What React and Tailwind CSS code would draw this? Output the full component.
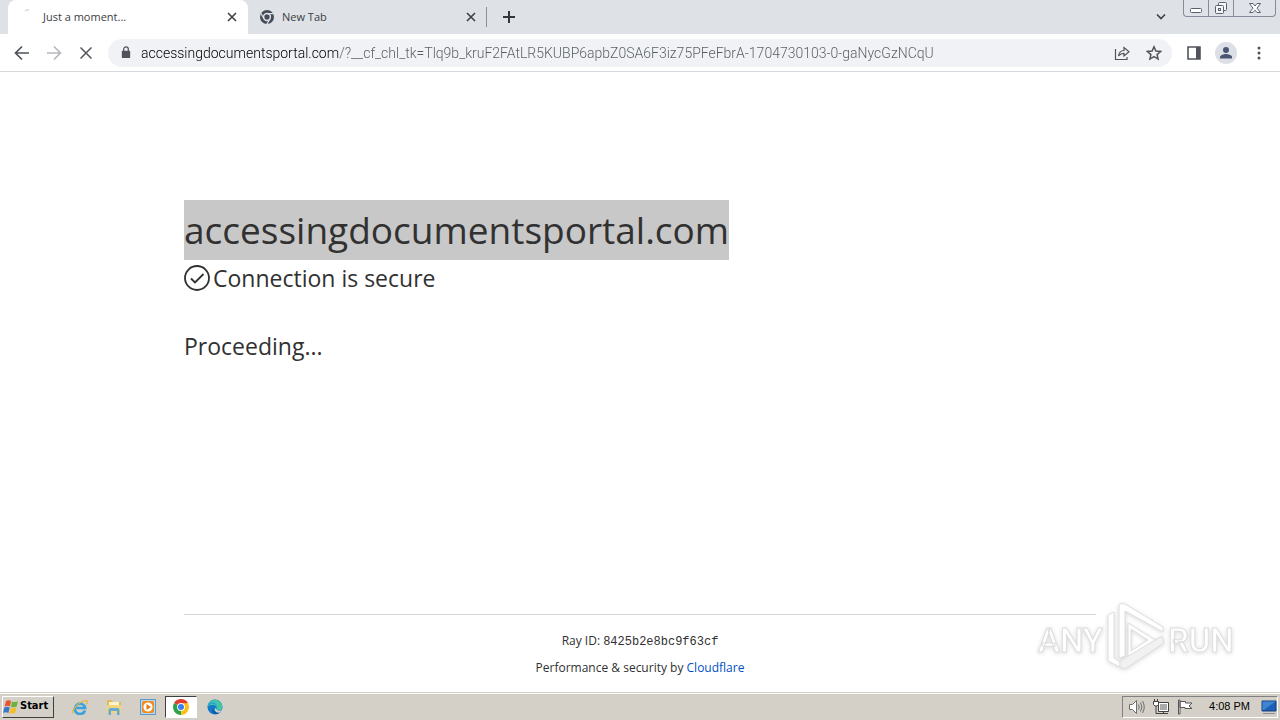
import React from "react";

const URL_TEXT =
  "accessingdocumentsportal.com/?__cf_chl_tk=Tlq9b_kruF2FAtLR5KUBP6apbZ0SA6F3iz75PFeFbrA-1704730103-0-gaNycGzNCqU";

function CloseIcon({ className }) {
  return (
    <svg viewBox="0 0 10 10" className={className} fill="none" stroke="currentColor" strokeWidth="1.6">
      <path d="M1 1l8 8M9 1L1 9" />
    </svg>
  );
}

function ChromeMono() {
  return (
    <svg viewBox="0 0 16 16" className="size-4 shrink-0">
      <circle cx="8" cy="8" r="7" fill="#454b58" />
      <circle cx="8" cy="8" r="3.4" fill="#454b58" stroke="#dee1e6" strokeWidth="1.5" />
      <path d="M8 4.6h6.4M5 9.7L1.9 4.3M11 9.7l-3.1 5.4" stroke="#dee1e6" strokeWidth="1.2" />
    </svg>
  );
}

function ChromeColor() {
  return (
    <svg viewBox="0 0 16 16" className="size-4">
      <path d="M8 8L1.1 4A8 8 0 0 1 14.9 4z" fill="#e33b2e" />
      <path d="M8 8l6.9-4A8 8 0 0 1 8 16z" fill="#fbc116" />
      <path d="M8 8v8A8 8 0 0 1 1.1 4z" fill="#2da14c" />
      <path d="M8 4.2h6.9L11.4 10 8 16l3.2-6.2z" fill="#fbc116" />
      <circle cx="8" cy="8" r="3.9" fill="#fff" />
      <circle cx="8" cy="8" r="3" fill="#3b7ded" />
    </svg>
  );
}

function Tabs() {
  return (
    <div className="flex h-[34px] shrink-0 items-start bg-[#dee1e6] text-[#3c4043]">
      <div role="tablist" className="flex h-full items-center">
        <div className="ml-2 flex h-full w-60 items-center rounded-t-lg bg-white pr-[11px] pl-4 text-[11px]">
          <svg viewBox="0 0 16 16" className="size-4 shrink-0" fill="none" stroke="#c4c7cc">
            <path d="M1 2q2-1.6 4-1" />
          </svg>
          <button role="tab" aria-selected="true" className="ml-[3px] flex-1 text-left">Just a moment...</button>
          <button aria-label="Close tab"><CloseIcon className="size-[10px]" /></button>
        </div>
        <div className="flex h-full w-[238px] items-center pr-[10px] pl-[11px] text-[11px]">
          <ChromeMono />
          <button role="tab" aria-selected="false" className="ml-[7px] flex-1 text-left">New Tab</button>
          <button aria-label="Close tab"><CloseIcon className="size-[10px]" /></button>
        </div>
        <div className="h-5 w-px bg-[#8d9197]" />
        <button aria-label="New tab" className="ml-4">
          <svg viewBox="0 0 12 12" className="size-3" stroke="#33373d" strokeWidth="2"><path d="M6 0v12M0 6h12" /></svg>
        </button>
      </div>
      <button aria-label="Search tabs" className="mt-3 mr-[17px] ml-auto">
        <svg viewBox="0 0 10 10" className="size-[10px]" fill="none" stroke="#3c4043" strokeWidth="1.6"><path d="M1 2.5l4 4 4-4" /></svg>
      </button>
      <div className="mr-1 flex h-[17px] rounded-b border border-t-0 border-[#858b98] bg-[#dfe2e8] text-[#5a606c]">
        <button aria-label="Minimize" className="flex w-[25px] items-center justify-center border-r border-[#858b98]">
          <svg viewBox="0 0 14 14" className="size-[14px]" fill="#fff" stroke="currentColor"><rect x="1.5" y="7.5" width="11" height="4" rx="1" /></svg>
        </button>
        <button aria-label="Restore" className="flex w-[25px] items-center justify-center border-r border-[#858b98]">
          <svg viewBox="0 0 14 14" className="size-[14px]" fill="#f4f5f7" stroke="currentColor">
            <rect x="4.5" y="1.5" width="8" height="8" rx="1" />
            <rect x="1.5" y="4.5" width="8" height="8" rx="1" />
            <rect x="4.5" y="7.5" width="2" height="2" />
          </svg>
        </button>
        <button aria-label="Close" className="flex w-[41px] items-center justify-center">
          <svg viewBox="0 0 14 14" className="size-[14px]" fill="#fff" stroke="currentColor">
            <path d="M1.5 2.5h3.500l2 2.500 2-2.500h3.500L9 7.200l3.500 4.300H9L7 9.200l-2 2.300H1.500L5 7.200z" />
          </svg>
        </button>
      </div>
    </div>
  );
}

function Toolbar() {
  return (
    <div className="flex h-[38px] shrink-0 items-center border-b border-[#d5d8dc] bg-white pr-[13px] pl-[14px] text-[#50545a]">
      <button aria-label="Back">
        <svg viewBox="0 0 16 16" className="size-4" fill="none" stroke="currentColor" strokeWidth="1.7"><path d="M15 8H2M8 1.500L1.500 8 8 14.500" /></svg>
      </button>
      <button aria-label="Forward" className="ml-4 text-[#b5b8bc]">
        <svg viewBox="0 0 16 16" className="size-4" fill="none" stroke="currentColor" strokeWidth="1.7"><path d="M1 8h13M8 1.500L14.500 8 8 14.500" /></svg>
      </button>
      <button aria-label="Stop" className="ml-[18px]">
        <svg viewBox="0 0 12 12" className="size-3" fill="none" stroke="currentColor" strokeWidth="1.5"><path d="M.5.5l11 11M11.500.5l-11 11" /></svg>
      </button>
      <div className="ml-4 flex h-7 flex-1 items-center rounded-full bg-[#f0f2f5] pr-[10px] pl-3">
        <svg viewBox="0 0 12 14" className="h-[13px] w-3 shrink-0">
          <rect x="1.500" y="5" width="9" height="8" rx="1" fill="#50545a" />
          <path d="M3.500 5.500V3.500a2.500 2.500 0 0 1 5 0v2" fill="none" stroke="#50545a" strokeWidth="1.400" />
        </svg>
        <input
          aria-label="Address"
          defaultValue={URL_TEXT}
          className="ml-[9px] min-w-0 flex-1 bg-transparent bg-linear-to-r from-black from-[198px] to-[#565b61] to-[198px] bg-clip-text font-['Roboto',sans-serif] text-[14px] leading-5 font-light text-transparent outline-none"
        />
        <button aria-label="Share">
          <svg viewBox="0 0 16 16" className="size-4" fill="none" stroke="currentColor" strokeWidth="1.200">
            <path d="M1.500 4v10.500h11.500V12M4.500 11C5 7.500 7 5.500 10 5.500V2.500l5 4.300-5 4.200V8.300C7.500 8.300 6 9 4.500 11z" />
          </svg>
        </button>
        <button aria-label="Bookmark" className="ml-4">
          <svg viewBox="0 0 16 16" className="size-4" fill="none" stroke="currentColor" strokeWidth="1.500">
            <path d="M8 1.800l1.900 4.300 4.700.4-3.500 3.100 1 4.500L8 11.700l-4.100 2.400 1-4.500L1.400 6.500l4.700-.4z" />
          </svg>
        </button>
      </div>
      <button aria-label="Side panel" className="ml-[15px]">
        <svg viewBox="0 0 14 14" className="size-[14px]"><path d="M1 1h12v12H1z" fill="none" stroke="#50545a" strokeWidth="1.600" /><path d="M9 1h4v12H9z" fill="#50545a" /></svg>
      </button>
      <button aria-label="Profile" className="ml-[14px]">
        <svg viewBox="0 0 22 22" className="size-[22px]">
          <circle cx="11" cy="11" r="11" fill="#dcdfe5" />
          <circle cx="11" cy="8" r="3" fill="#4a5572" />
          <path d="M5 16.500v-1.500c0-2 4-3 6-3s6 1 6 3v1.500z" fill="#4a5572" />
        </svg>
      </button>
      <button aria-label="Menu" className="ml-[14px]">
        <svg viewBox="0 0 16 16" className="size-4" fill="#50545a"><circle cx="8" cy="3" r="1.500" /><circle cx="8" cy="8" r="1.500" /><circle cx="8" cy="13" r="1.500" /></svg>
      </button>
    </div>
  );
}

function Watermark() {
  return (
    <svg viewBox="0 0 210 76" className="absolute right-[40px] bottom-4 h-[76px] w-[210px]" aria-label="ANY RUN">
      <g fill="#fff" stroke="#dedede" strokeWidth="1" className="drop-shadow-[0_1px_2px_rgba(0,0,0,0.15)]">
        <text x="8" y="52" fontSize="33" fontWeight="500" className="font-['Roboto',sans-serif]">ANY</text>
        <text x="138" y="52" fontSize="33" fontWeight="500" className="font-['Roboto',sans-serif]">RUN</text>
        <path d="M78 16q0-2 6-4v46l6 4v5l-12-6z" />
        <path fillRule="evenodd" d="M89 5q3-3 6-1l38 23v5L95 11v45l-6 2zM98 23l27 17-27 17zM101 29v22l17-11z" />
        <path d="M90 61l42-25 2 7-39 26-5-2z" fill="#f1f1f1" />
      </g>
    </svg>
  );
}

function Page() {
  return (
    <main className="relative flex min-h-0 flex-1 flex-col overflow-hidden bg-white px-[184px] text-[#313131]">
      <div className="flex flex-1 flex-col items-start pt-32">
        <h1 className="bg-[#c8c8c8] text-[37px] leading-[60px]">accessingdocumentsportal.com</h1>
        <h2 className="flex h-9 items-center gap-[3px] text-[23px] leading-9">
          <svg viewBox="0 0 26 26" className="size-[26px]" fill="none" stroke="#313131" strokeWidth="1.8">
            <circle cx="13" cy="13" r="12" />
            <path d="M7 13.500l4 4L19.500 9" />
          </svg>
          Connection is secure
        </h2>
        <p className="mt-8 text-[23px] leading-9">Proceeding...</p>
      </div>
      <footer className="mb-3 border-t border-[#d5d5d5] pt-4 text-center text-[12px] leading-[18px]">
        <p className="mb-2 pt-px">
          Ray ID: <code className="font-['Liberation_Mono',monospace]">8425b2e8bc9f63cf</code>
        </p>
        <p className="pb-[3px]">
          Performance &amp; security by <a href="#cloudflare" className="text-[#0051c3]">Cloudflare</a>
        </p>
      </footer>
      <Watermark />
    </main>
  );
}

function Taskbar() {
  return (
    <div className="flex h-7 shrink-0 items-center border-t border-[#d4d0c8] bg-[#d4d0c8] pl-[2px] text-black shadow-[inset_0_1px_0_#fff]">
      <button className="flex h-[22px] w-[52px] items-center gap-px border border-t-white border-r-[#404040] border-b-[#404040] border-l-white font-['DejaVu_Sans_Condensed','Noto_Sans',sans-serif] text-[11px] font-bold">
        <svg viewBox="0 0 16 16" className="size-4 shrink-0">
          <path d="M3 2q2.500-1.500 5 0L7 7.500q-2.500-1.500-5.300 0z" fill="#e8552b" />
          <path d="M9 2.500q3 1.200 6-.3L13.700 7.500q-3 1.500-5.700.3z" fill="#6cb33e" />
          <path d="M1.400 8.500q2.500-1.500 5.300 0l-1.300 5.500q-2.500-1.500-5.400 0z" fill="#3877c8" />
          <path d="M7.700 8.800q2.800 1.200 5.800-.3l-1.400 5.200q-2.800 1.500-5.700.3z" fill="#f7bd25" />
        </svg>
        Start
      </button>
      <div className="ml-[18px] flex items-center gap-[9px]">
        <button aria-label="Internet Explorer" className="w-[25px]">
          <svg viewBox="0 0 16 16" className="size-4" fill="none">
            <path d="M13 11.500A5.200 5.200 0 1 1 13.200 9H4.500" stroke="#3aa3df" strokeWidth="2.600" />
            <path d="M1 14.500C-1 11 8 2 14 1.500c2.500 0 1 3 0 4" stroke="#e9b62f" strokeWidth="1.200" />
          </svg>
        </button>
        <button aria-label="File Explorer" className="w-[25px]">
          <svg viewBox="0 0 16 16" className="size-4">
            <path d="M1 1h5l1 2h8v11H1z" fill="#dfb95a" />
            <path d="M3 3h10v4H3z" fill="#fbf4c8" />
            <path d="M1 6h14v8H1z" fill="#f0d57e" />
            <path d="M2.500 16v-5q0-2 2-2h7q2 0 2 2v5h-2.500v-4H5v4z" fill="#67a9d0" />
          </svg>
        </button>
        <button aria-label="Media Player" className="w-[25px]">
          <svg viewBox="0 0 16 16" className="size-4">
            <rect x=".5" y=".5" width="15" height="15" fill="#b9d8ee" stroke="#5e9ac7" />
            <rect x="2" y="2" width="12" height="12" rx="2" fill="#f08b1d" />
            <circle cx="8" cy="8" r="4.600" fill="#fff" />
            <path d="M6.500 5l4.500 3-4.500 3z" fill="#e87817" />
          </svg>
        </button>
      </div>
      <button aria-label="Google Chrome" className="flex h-[22px] w-8 items-center justify-center border border-t-[#404040] border-r-white border-b-white border-l-[#404040] bg-white">
        <ChromeColor />
      </button>
      <button aria-label="Microsoft Edge" className="ml-[10px]">
        <svg viewBox="0 0 16 16" className="size-4">
          <circle cx="8" cy="8" r="7.500" fill="#1479c9" />
          <path d="M.6 7A7.500 7.500 0 0 1 15.500 8c0 2.500-2 3.500-4 3.500-1.500 0-2.500-.7-2-1.500C11 7 7 4.500.6 7z" fill="#43c6a7" />
          <path d="M.6 7C2 2 9 2 10 7 6 3.500 1.500 5 .6 9z" fill="#2aa4d8" />
          <path d="M5.500 9c0 3 3 5 7.500 4.500C9 16.500 4 14 5.500 9z" fill="#0d4c9b" />
          <path d="M9.500 10c-.5 1.500 3 2.500 5.500.7-1 1.800-2 2.800-3.300 3.100C8 13.500 7 10.500 8.500 9z" fill="#d4d0c8" />
        </svg>
      </button>
      <div className="mr-[2px] ml-auto flex h-[22px] items-center border border-t-[#808080] border-r-white border-b-white border-l-[#808080] pl-[6px]">
        <button aria-label="Volume">
          <svg viewBox="0 0 16 16" className="size-4" fill="none" stroke="#6d6d6d">
            <path d="M.5 5.500h3l4-4v13l-4-4h-3z" fill="#fff" />
            <path d="M9.500 5.500q1.500 2.500 0 5M11.500 3.500q3 4.500 0 9M13.500 2q3.500 6 0 12" />
          </svg>
        </button>
        <button aria-label="Network" className="ml-2">
          <svg viewBox="0 0 16 16" className="size-4" fill="none" stroke="#404040">
            <path d="M5.500 3.500h10v9h-10z" fill="#fff" />
            <path d="M7 5h7v6H7z" fill="#a9a9a9" stroke="none" />
            <path d="M7 14.500h8M10.500 12.500v2" />
            <path d="M.5 2.500h5v3l-1.500 1.500h-2L.5 5.500z" fill="#fff" />
            <path d="M1.500 0v2.500M4.500 0v2.500M3 7v7.500h4" />
          </svg>
        </button>
        <button aria-label="Action Center" className="ml-2">
          <svg viewBox="0 0 16 16" className="size-4" fill="#fff" stroke="#555">
            <path d="M1.500 1h1.500v14H1.500zM3 2.500h5.500V4h6.500l-3 3 3 2.500H8V8.500H3z" />
          </svg>
        </button>
        <time className="ml-4 font-['Liberation_Sans',sans-serif] text-[11px]">4:08 PM</time>
        <button aria-label="Show desktop" className="ml-[11px]">
          <svg viewBox="0 0 16 16" className="size-4">
            <path d="M1 2h14v10H1z" fill="#1d5fb8" stroke="#17407c" />
            <path d="M1.500 2.500h13L3 11H1.500z" fill="#3f83d3" />
            <path d="M2 14h12v1H2z" fill="#8b9099" />
          </svg>
        </button>
      </div>
    </div>
  );
}

export default function App() {
  return (
    <div className="flex h-screen flex-col overflow-hidden bg-white font-['Open_Sans','Noto_Sans',sans-serif]">
      <Tabs />
      <Toolbar />
      <Page />
      <Taskbar />
    </div>
  );
}
